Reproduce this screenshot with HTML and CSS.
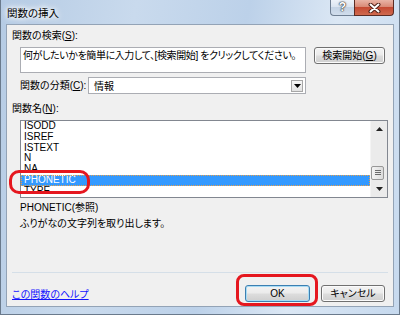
FILE: index.html
```html
<!DOCTYPE html>
<html lang="ja">
<head>
    <meta charset="UTF-8">
    <title>関数の挿入</title>
    <link rel="stylesheet" href="styles.css">
</head>
<body>
<div class="window">
    <div class="titlebar">
        <span class="title">関数の挿入</span>
        <div class="caption">
            <span class="cap-help">?</span>
            <span class="cap-close">
                <svg width="13" height="10" viewBox="0 0 13 10">
                    <path d="M2.5 1.5 L10.5 8.5 M10.5 1.5 L2.5 8.5" stroke="#4e2018" stroke-width="4" stroke-linecap="round"/>
                    <path d="M2.5 1.5 L10.5 8.5 M10.5 1.5 L2.5 8.5" stroke="#fff" stroke-width="2" stroke-linecap="round"/>
                </svg>
            </span>
        </div>
    </div>
    <div class="client">
        <div class="label top-label">関数の検索(<u>S</u>):</div>
        <div class="search-row">
            <div class="search-box">何がしたいかを簡単に入力して、[検索開始] をクリックしてください。</div>
            <div class="btn btn-search">検索開始(<u>G</u>)</div>
        </div>
        <div class="cat-row">
            <span class="label cat-label">関数の分類(<u>C</u>):</span>
            <div class="select">
                <span class="select-value">情報</span>
                <span class="select-arrow">
                    <svg width="7" height="4" viewBox="0 0 7 4"><polygon points="0,0 7,0 3.5,4" fill="#000"/></svg>
                </span>
            </div>
        </div>
        <div class="label names-label">関数名(<u>N</u>):</div>
        <div class="listbox">
            <ul class="items">
                <li>ISODD</li>
                <li>ISREF</li>
                <li>ISTEXT</li>
                <li>N</li>
                <li>NA</li>
                <li class="selected">PHONETIC</li>
                <li>TYPE</li>
            </ul>
            <div class="scrollbar">
                <div class="sb-arrow">
                    <svg width="7" height="4" viewBox="0 0 7 4"><polygon points="0,4 7,4 3.5,0" fill="#222"/></svg>
                </div>
                <div class="sb-track">
                    <div class="sb-thumb">
                        <svg width="6" height="6" viewBox="0 0 6 6">
                            <path d="M0 0.5 H6 M0 2.5 H6 M0 4.5 H6" stroke="#6b6b6b" stroke-width="1"/>
                        </svg>
                    </div>
                </div>
                <div class="sb-arrow">
                    <svg width="7" height="4" viewBox="0 0 7 4"><polygon points="0,0 7,0 3.5,4" fill="#222"/></svg>
                </div>
            </div>
            <div class="mark mark-item"></div>
        </div>
        <div class="desc">
            <div>PHONETIC(参照)</div>
            <div>ふりがなの文字列を取り出します。</div>
        </div>
        <div class="sep"></div>
        <div class="footer">
            <a class="help-link" href="#">この関数のヘルプ</a>
            <div class="buttons">
                <div class="ok-wrap">
                    <div class="btn btn-ok">OK</div>
                    <div class="mark mark-ok"></div>
                </div>
                <div class="btn btn-cancel">キャンセル</div>
            </div>
        </div>
    </div>
</div>
</body>
</html>
```

FILE: styles.css
```css
body {
    margin: 0;
    font-family: "Liberation Sans", "Noto Sans CJK JP", sans-serif;
    font-size: 10px;
    font-feature-settings: "palt";
    color: #000;
}
.window {
    width: 400px;
    height: 315px;
    box-sizing: border-box;
    padding: 0 5px 7px 5px;
    border: 1px solid #6a7a8c;
    border-top: none;
    background: linear-gradient(100deg, #b5cbe4 0%, #c9daed 30%, #bcd1e9 55%, #dbe7f4 75%, #c6d9ee 100%);
}
.titlebar {
    height: 24px;
    display: flex;
    justify-content: space-between;
    align-items: flex-start;
}
.title {
    margin: 6px 0 0 1px;
    line-height: 14px;
    font-size: 10.5px;
    text-shadow: 0 0 4px #fff, 0 0 6px #fff, 0 0 8px #fff;
}
.caption {
    display: flex;
}
.cap-help {
    width: 24px;
    height: 16px;
    box-sizing: border-box;
    border: 1px solid #6f7f93;
    border-top: none;
    border-right: none;
    border-radius: 0 0 0 4px;
    background: linear-gradient(#edf2f9 0%, #dbe5f1 45%, #c4d3e5 50%, #d0ddec 100%);
    color: #fff;
    font-weight: bold;
    font-size: 12px;
    line-height: 15px;
    text-align: center;
    text-shadow: 0 0 1px #333, 0 0 1px #333, 0 0 2px #333;
}
.cap-close {
    width: 40px;
    height: 16px;
    box-sizing: border-box;
    border: 1px solid #5b2c24;
    border-top: none;
    border-radius: 0 0 4px 0;
    background: linear-gradient(#e9b4a6 0%, #d98a77 45%, #c54a33 50%, #cf6a4f 100%);
    display: flex;
    align-items: center;
    justify-content: center;
}
.client {
    height: 283px;
    box-sizing: border-box;
    border: 1px solid #93a3b6;
    background: #f0f0f0;
    padding-top: 4px;
}
.label {
    line-height: 14px;
    white-space: nowrap;
}
.top-label {
    padding-left: 5px;
}
.search-row {
    display: flex;
    align-items: flex-start;
    gap: 8px;
    margin: 4px 0 0 13px;
}
.search-box {
    width: 286px;
    height: 26px;
    box-sizing: border-box;
    border: 1px solid #abadb3;
    background: #fff;
    padding: 1px 2px 0 2px;
    line-height: 13px;
    white-space: nowrap;
    overflow: hidden;
    letter-spacing: -0.4px;
}
.btn {
    height: 17px;
    box-sizing: border-box;
    border: 1px solid #707070;
    border-radius: 3px;
    background: linear-gradient(#f3f3f3 0%, #ebebeb 48%, #dddddd 52%, #cfcfcf 100%);
    box-shadow: inset 0 0 0 1px #fbfbfb;
    line-height: 15px;
    text-align: center;
    white-space: nowrap;
}
.btn-search {
    width: 71px;
}
.cat-row {
    display: flex;
    align-items: center;
    margin: 4px 0 0 13px;
}
.cat-label {
    width: 68px;
}
.select {
    width: 218px;
    height: 17px;
    box-sizing: border-box;
    border: 1px solid #abadb3;
    background: #fff;
    display: flex;
    align-items: center;
    justify-content: space-between;
    padding: 0 2px 0 5px;
}
.select-arrow {
    width: 12px;
    height: 12px;
    box-sizing: border-box;
    border: 1px solid #a7a7a7;
    background: linear-gradient(#f6f6f6, #e2e2e2);
    display: flex;
    align-items: center;
    justify-content: center;
}
.names-label {
    padding-left: 5px;
    margin-top: 8px;
}
.listbox {
    position: relative;
    width: 368px;
    height: 78px;
    box-sizing: border-box;
    margin: 4px 0 0 13px;
    border: 1px solid #828790;
    background: #fff;
    display: flex;
}
.items {
    flex: 1;
    margin: 0;
    padding: 0;
    list-style: none;
    overflow: hidden;
    font-size: 10px;
    line-height: 10.8px;
}
.items li {
    padding-left: 3px;
}
.items li.selected {
    background: #3399ff;
    color: #fff;
    outline: 1px dotted #e8a04a;
    outline-offset: -1px;
}
.scrollbar {
    width: 16px;
    display: flex;
    flex-direction: column;
    background: #ebebeb;
    border-left: 1px solid #f4f4f4;
}
.sb-arrow {
    height: 16px;
    display: flex;
    align-items: center;
    justify-content: center;
}
.sb-track {
    flex: 1;
}
.sb-thumb {
    width: 13px;
    height: 14px;
    box-sizing: border-box;
    margin-top: 29px;
    border: 1px solid #979797;
    border-radius: 2px;
    background: linear-gradient(to right, #f3f3f3, #dcdcdc);
    display: flex;
    align-items: center;
    justify-content: center;
}
.mark {
    position: absolute;
    box-sizing: border-box;
    border: 3px solid #e5171f;
}
.mark-item {
    left: -12px;
    top: 49px;
    width: 81px;
    height: 24px;
    border-radius: 10px;
}
.desc {
    margin: 2px 0 0 13px;
    line-height: 16px;
}
.sep {
    height: 1px;
    margin: 40px 5px 0 5px;
    background: #d5dfe8;
}
.footer {
    display: flex;
    justify-content: space-between;
    align-items: center;
    margin-top: 12px;
    padding: 0 8px 0 5px;
}
.help-link {
    color: #1414ff;
    text-decoration: underline;
}
.buttons {
    display: flex;
    gap: 11px;
}
.ok-wrap {
    position: relative;
}
.btn-ok {
    width: 65px;
    border-color: #3c7fb1;
    box-shadow: inset 0 0 0 1px #a8dcf5;
}
.btn-cancel {
    width: 64px;
}
.mark-ok {
    left: -9px;
    top: -11px;
    width: 82px;
    height: 32px;
    border-radius: 8px;
}
```
